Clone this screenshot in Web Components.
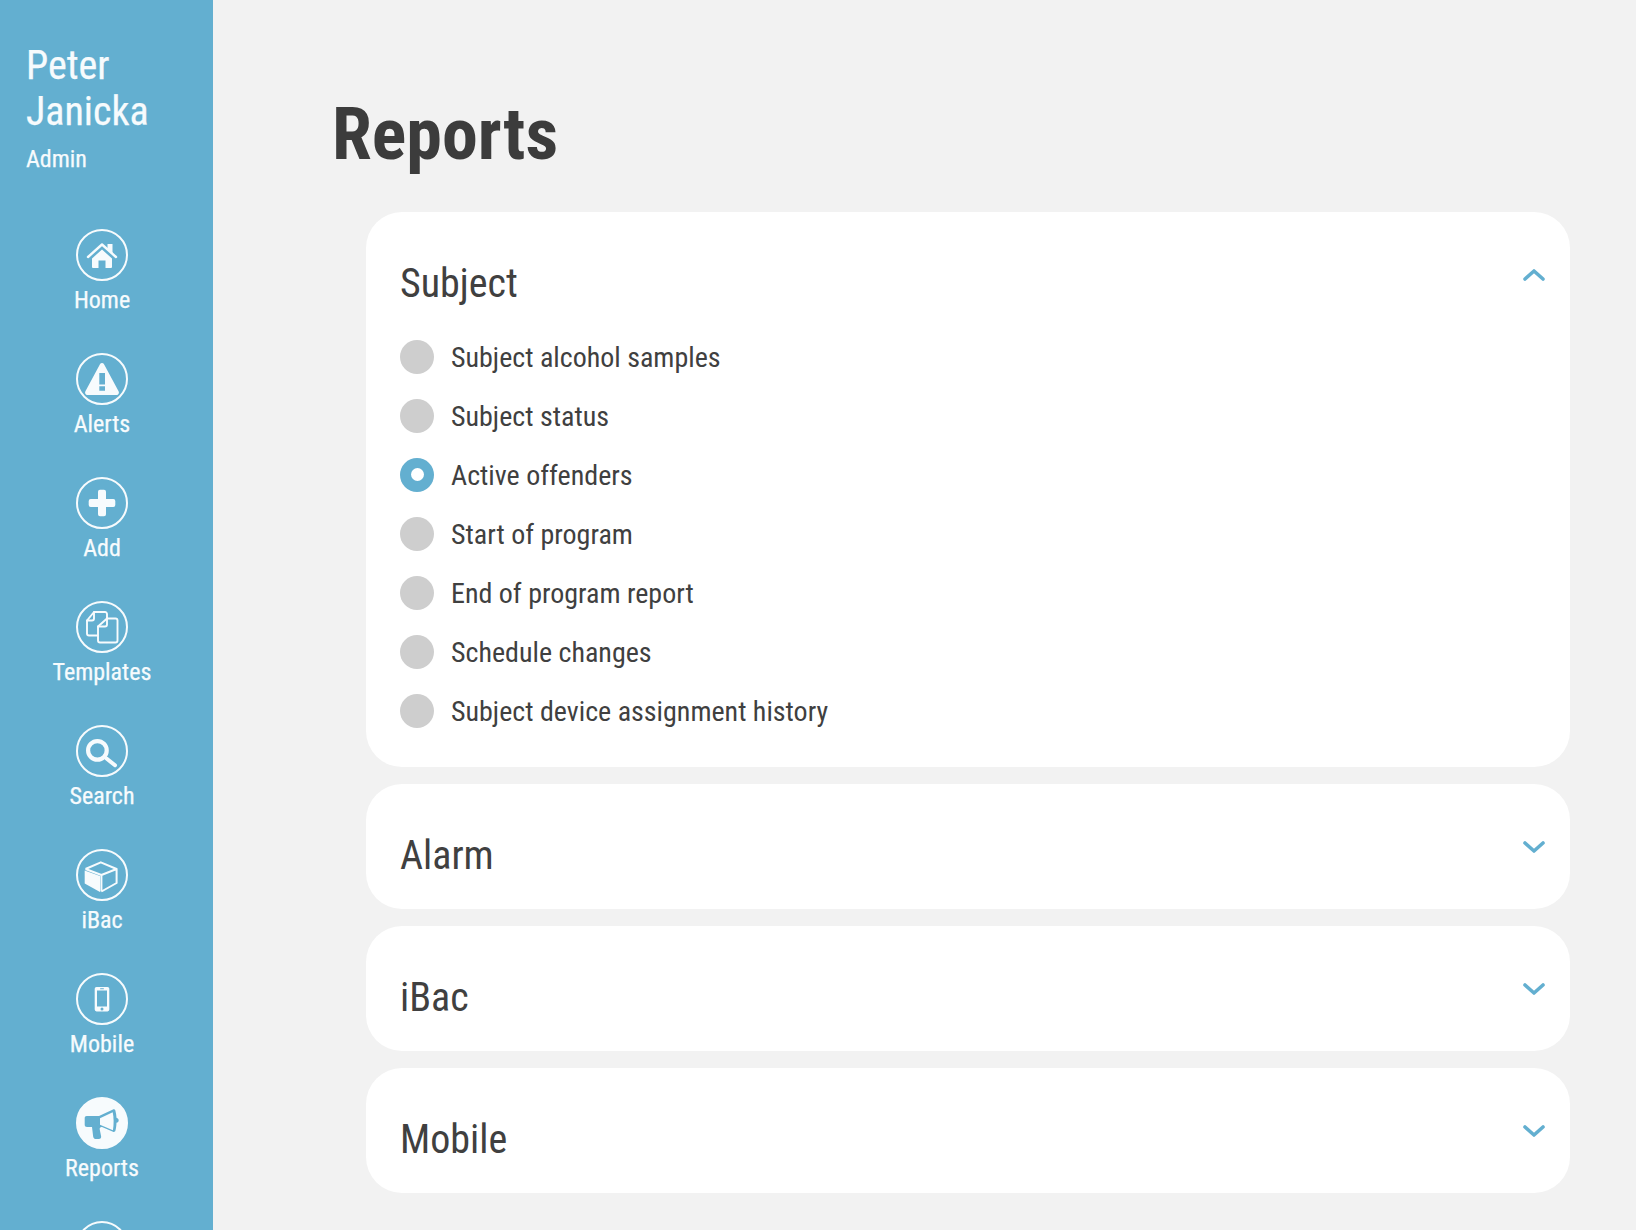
<!DOCTYPE html>
<html><head><meta charset="utf-8"><style>
html,body{margin:0;height:1230px;overflow:hidden;background:#f2f2f2;font-family:"Roboto",sans-serif;color:#3c3c3c}
</style></head><body>
<app-shell>
<side-bar slot="side" first="Peter" last="Janicka" role-name="Admin">
<nav-item label="Home" icon="home"></nav-item>
<nav-item label="Alerts" icon="alert"></nav-item>
<nav-item label="Add" icon="add"></nav-item>
<nav-item label="Templates" icon="templates"></nav-item>
<nav-item label="Search" icon="search"></nav-item>
<nav-item label="iBac" icon="box"></nav-item>
<nav-item label="Mobile" icon="mobile"></nav-item>
<nav-item label="Reports" icon="reports" active></nav-item>
<nav-item label="" icon="none"></nav-item>
</side-bar>
<page-title>Reports</page-title>
<report-card title-text="Subject" open>
<report-radio>Subject alcohol samples</report-radio>
<report-radio>Subject status</report-radio>
<report-radio checked>Active offenders</report-radio>
<report-radio>Start of program</report-radio>
<report-radio>End of program report</report-radio>
<report-radio>Schedule changes</report-radio>
<report-radio>Subject device assignment history</report-radio>
</report-card>
<report-card title-text="Alarm"></report-card>
<report-card title-text="iBac"></report-card>
<report-card title-text="Mobile"></report-card>
</app-shell>
<script>
const cond=`font-family:"Roboto Condensed","Roboto",sans-serif;font-stretch:75%;`;
const IC={
home:'<path d="M6 19.500 16 10.500 26 19.500V28a1 1 0 0 1-1 1H19.500V21.500H12.500V29H7a1 1 0 0 1-1-1z"/><path d="M2 18 16 5.500 30 18" fill="none" stroke="currentColor" stroke-width="2.400" stroke-linecap="round" stroke-linejoin="round"/><path d="M21.500 5h5v9.500l-5-4.500z"/>',
alert:'<path fill-rule="evenodd" d="M16 0c.8 0 1.500.4 1.900 1.100L32.700 28.500c.7 1.600-.2 3.500-2 3.500H1.300c-1.800 0-2.700-1.900-2-3.500L14.100 1.100C14.500.4 15.200 0 16 0zM13.300 10v11.500h5.700V10zM13.300 23.300v4.500h5.700v-4.500z"/>',
add:'<path d="M14 2.700h4a2 2 0 0 1 2 2V12h7.300a2 2 0 0 1 2 2v4a2 2 0 0 1-2 2H20v7.300a2 2 0 0 1-2 2h-4a2 2 0 0 1-2-2V20H4.700a2 2 0 0 1-2-2v-4a2 2 0 0 1 2-2H12V4.700a2 2 0 0 1 2-2z"/>',
templates:'<g fill="none" stroke="currentColor" stroke-width="1.900" stroke-linejoin="round" stroke-linecap="round"><path d="M21 7V3a2 2 0 0 0-2-2H8L1 9.500V22.500a2 2 0 0 0 2 2h8"/><path d="M1 9.500H6a2 2 0 0 0 2-2V1"/><path d="M21 7.500H29.500a2 2 0 0 1 2 2V29.500a2 2 0 0 1-2 2H14a2 2 0 0 1-2-2V15.500z"/><path d="M12 15.500H19a2 2 0 0 0 2-2V7.500"/></g>',
search:'<circle cx="11.400" cy="15.400" r="9.300" fill="none" stroke="currentColor" stroke-width="4.200"/><path d="M20.500 23.500l8.500 6.700" stroke="currentColor" stroke-width="4" stroke-linecap="round"/>',
box:'<path d="M-1.300 11.500 14 17v16L-1.300 24.500z"/><path d="M-.5 10 14.800 3.300 30.600 10V24L15.400 32.500M-.5 10 15.400 16 30.600 10M15.400 16V32.500" fill="none" stroke="currentColor" stroke-width="2" stroke-linejoin="round"/>',
mobile:'<path fill-rule="evenodd" d="M10.500 4h11A1.800 1.800 0 0 1 23.300 5.800v20.800a1.800 1.800 0 0 1-1.800 1.800h-11a1.800 1.800 0 0 1-1.800-1.800V5.800A1.800 1.800 0 0 1 10.500 4zM11 7.400v16h10v-16zM14.200 5.300v1h3.600v-1zM16 24.400a1.500 1.500 0 1 0 0 3 1.500 1.500 0 0 0 0-3z"/>',
reports:'<path d="M-1.300 11c0-1.300.8-2 2-2H13L27 2.500c1.200-.5 2.100.1 2.400 1.200.6 2.200 1 4.500 1.100 7 1.300.4 2.200 1.300 2.200 2.500 0 1.300-.9 2.200-2.200 2.500-.1 3-.5 5.800-1.100 8-.3 1-1.200 1.500-2.400 1L16 20c-1.500-.2-2.600.8-2.300 2.300l1.400 6.900c.3 1.400-.6 2.800-2.200 2.800h-2.800c-1.500 0-2.600-.9-2.900-2.300L6 20H1c-1.400 0-2.300-1-2.300-2.300z" fill="#63afd0"/><path d="M14 11.200 26.700 5.300c1.200 5.500 1.200 12 .2 18L14 17.800z" fill="#f7fbfd"/>'
};
class El extends HTMLElement{ constructor(){super();this.attachShadow({mode:'open'});} }
customElements.define('app-shell',class extends El{connectedCallback(){this.shadowRoot.innerHTML=`<style>
:host{display:grid;grid-template-columns:213px 1fr;height:1230px;overflow:hidden}
main{min-width:0;padding:0 66px 0 119px;display:flex;flex-direction:column}
.cards{display:flex;flex-direction:column;gap:17px;padding-left:34px}
</style><slot name="side"></slot><main><slot name="t"></slot><div class="cards"><slot></slot></div></main>`;
this.querySelector('page-title').slot='t';}});
customElements.define('side-bar',class extends El{connectedCallback(){const a=n=>this.getAttribute(n);this.shadowRoot.innerHTML=`<style>
:host{display:flex;flex-direction:column;height:1230px;overflow:hidden;background:#63afd0;color:#f7fbfd;${cond}-webkit-text-stroke:.25px currentColor}
.u{padding:43px 0 0 26px;height:187px;box-sizing:border-box;flex:none}
.n{font-size:40px;line-height:46px;font-weight:400}
.r{font-size:24px;line-height:28px;margin-top:10px}
.list{padding:42px 9px 0 0;display:flex;flex-direction:column}
</style><div class="u"><div class="n">${a('first')}<br>${a('last')}</div><div class="r">${a('role-name')}</div></div><div class="list"><slot></slot></div>`;}});
customElements.define('nav-item',class extends El{connectedCallback(){const ic=this.getAttribute('icon'),act=this.hasAttribute('active');this.shadowRoot.innerHTML=`<style>
:host{display:flex;flex-direction:column;align-items:center;height:124px;flex:none}
.c{width:52px;height:52px;box-sizing:border-box;border:2px solid currentColor;border-radius:50%;display:flex;align-items:center;justify-content:center;flex:none}
.c.a{background:currentColor}
svg{width:32px;height:32px;fill:currentColor;color:#f7fbfd;overflow:visible}
.l{font-size:24px;line-height:28px;margin-top:5px;white-space:nowrap}
</style><div class="c ${act?'a':''}"><svg viewBox="0 0 32 32">${IC[ic]||''}</svg></div><div class="l">${this.getAttribute('label')}</div>`;}});
customElements.define('page-title',class extends El{connectedCallback(){this.shadowRoot.innerHTML=`<style>
:host{display:block;${cond}font-weight:700;font-size:72px;line-height:82px;padding-top:94px;height:212px;box-sizing:border-box;color:#3c3c3c}
</style><slot></slot>`;}});
customElements.define('report-card',class extends El{connectedCallback(){const o=this.hasAttribute('open');this.shadowRoot.innerHTML=`<style>
:host{display:block;background:#fff;border-radius:36px;padding:0 25px 0 34px;${cond}color:#404040}
.h{display:flex;justify-content:space-between;height:125px;box-sizing:border-box;padding-top:48px}
.t{font-size:40px;line-height:48px}
svg{width:22px;height:14px;margin-top:8px;fill:none;stroke:#63afd0;stroke-width:3.600;stroke-linecap:round;stroke-linejoin:round}
.b{margin-top:-9px;padding-bottom:26px;display:${o?'block':'none'}}
</style><div class="h"><div class="t">${this.getAttribute('title-text')}</div><svg viewBox="0 0 22 14"><path d="${o?'M2 11l9-8 9 8':'M2 3l9 8 9-8'}"/></svg></div><div class="b"><slot></slot></div>`;}});
customElements.define('report-radio',class extends El{connectedCallback(){const c=this.hasAttribute('checked');this.shadowRoot.innerHTML=`<style>
:host{display:flex;align-items:center;height:59px;gap:17px;font-size:28px}
.d{width:34px;height:34px;margin-bottom:2px;border-radius:50%;background:${c?'#63afd0':'#cecece'};display:flex;align-items:center;justify-content:center;flex:none}
.d i{width:13px;height:13px;border-radius:50%;background:#fff;display:${c?'block':'none'}}
</style><div class="d"><i></i></div><div><slot></slot></div>`;}});
</script></body></html>
